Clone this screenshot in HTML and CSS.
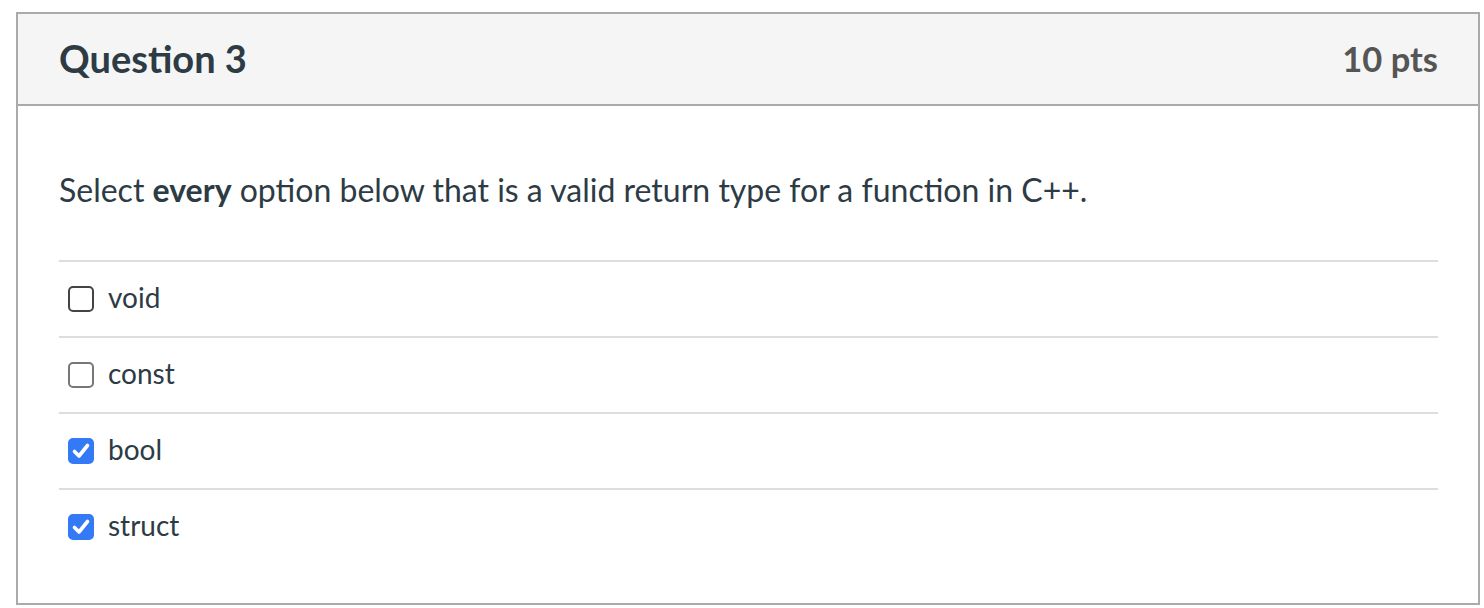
FILE: index.html
```html
<!DOCTYPE html>
<html>
<head>
<meta charset="utf-8">
<link rel="stylesheet" href="styles.css">
</head>
<body>
<div class="card">
  <div class="card-header">
    <h2 class="q-title">Question 3</h2>
    <span class="q-points">10 pts</span>
  </div>
  <div class="card-body">
    <p class="q-text">Select <strong>every</strong> option below that is a valid return type for a function in C++.</p>
    <ul class="answers">
      <li class="answer"><span class="box box-dark"></span><span class="label">void</span></li>
      <li class="answer"><span class="box"></span><span class="label">const</span></li>
      <li class="answer"><span class="box box-checked"><svg viewBox="0 0 26 26" width="26" height="26"><path d="M6.5 13.5 L11 18 L19.5 7.5" fill="none" stroke="#fff" stroke-width="3.6" stroke-linecap="round" stroke-linejoin="round"/></svg></span><span class="label">bool</span></li>
      <li class="answer"><span class="box box-checked"><svg viewBox="0 0 26 26" width="26" height="26"><path d="M6.5 13.5 L11 18 L19.5 7.5" fill="none" stroke="#fff" stroke-width="3.6" stroke-linecap="round" stroke-linejoin="round"/></svg></span><span class="label">struct</span></li>
    </ul>
  </div>
</div>
</body>
</html>
```

FILE: styles.css
```css
html, body {
  margin: 0;
  padding: 0;
  background: #ffffff;
}
body {
  padding: 12px 4px 0 16px;
  font-family: Lato, "Noto Sans", sans-serif;
  color: #2d3b45;
}
.card {
  border: 2px solid #aaaaaa;
  height: 593px;
  box-sizing: border-box;
  width: 1464px;
}
.card-header {
  background: #f5f5f5;
  border-bottom: 2px solid #aaaaaa;
  height: 92px;
  box-sizing: border-box;
  display: flex;
  align-items: center;
  justify-content: space-between;
  padding: 0 40px 2px 41px;
}
.q-title {
  margin: 0;
  font-size: 38px;
  font-weight: 700;
  color: #2d3b45;
}
.q-points {
  font-size: 34.5px;
  font-weight: 700;
  color: #555555;
}
.card-body {
  padding: 0 40px 0 41px;
}
.q-text {
  margin: 0;
  padding-top: 64px;
  height: 154px;
  box-sizing: border-box;
  font-size: 32px;
  line-height: 40px;
}
.q-text strong {
  font-weight: 700;
}
.answers {
  list-style: none;
  margin: 0;
  padding: 0;
}
.answer {
  border-top: 2px solid #dddddd;
  height: 76px;
  box-sizing: border-box;
  display: flex;
  align-items: center;
  padding-left: 9px;
  gap: 14px;
}
.box {
  width: 26px;
  height: 26px;
  box-sizing: border-box;
  border: 2px solid #777777;
  border-radius: 5px;
  display: flex;
  align-items: center;
  justify-content: center;
  flex: none;
}
.box-dark {
  border-color: #444444;
}
.box-checked {
  background: #3479f6;
  border-color: #3479f6;
}
.box-checked svg {
  display: block;
  margin: -2px;
}
.label {
  font-size: 28px;
  padding-bottom: 4px;
}
```
